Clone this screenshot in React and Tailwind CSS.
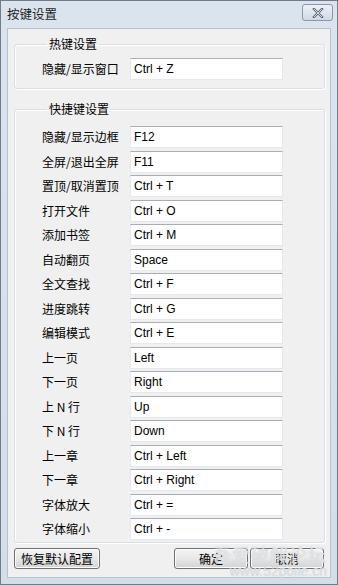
import React from "react";

const hotkeys = [
  ["隐藏/显示边框", "F12"],
  ["全屏/退出全屏", "F11"],
  ["置顶/取消置顶", "Ctrl + T"],
  ["打开文件", "Ctrl + O"],
  ["添加书签", "Ctrl + M"],
  ["自动翻页", "Space"],
  ["全文查找", "Ctrl + F"],
  ["进度跳转", "Ctrl + G"],
  ["编辑模式", "Ctrl + E"],
  ["上一页", "Left"],
  ["下一页", "Right"],
  ["上 N 行", "Up"],
  ["下 N 行", "Down"],
  ["上一章", "Ctrl + Left"],
  ["下一章", "Ctrl + Right"],
  ["字体放大", "Ctrl + ="],
  ["字体缩小", "Ctrl + -"],
];

const cjk = "font-['Noto_Sans_CJK_SC','Microsoft_YaHei',sans-serif]";

const KeyRow = ({ label, value }) => (
  <>
    <div className={`${cjk} text-[12px] leading-[22px] text-black`}>{label}</div>
    <input
      readOnly
      value={value}
      className="h-[22px] w-[153px] bg-white border border-[#e3e9ef] border-t-[#abadb3] px-[3px] font-['Liberation_Sans',Arial,sans-serif] text-[12px] text-black outline-none"
    />
  </>
);

const WinButton = ({ children, className = "" }) => (
  <button
    className={`h-[21px] rounded-[3px] border border-[#707070] bg-gradient-to-b from-[#f4f4f4] via-[#e8e8e8] to-[#d3d3d3] ${cjk} text-[12px] leading-none text-black shadow-[inset_0_0_0_1px_#fcfcfc] ${className}`}
  >
    {children}
  </button>
);

export default function App() {
  return (
    <div className="relative w-[338px] h-[585px] overflow-hidden border border-[#6f7c8b] bg-gradient-to-b from-[#dbe4ee] to-[#d3dee9] flex flex-col">
      <div className="h-[27px] flex items-center justify-between pl-[6px] pr-[4px] shrink-0">
        <span className={`${cjk} text-[12.5px] text-[#1e1e1e]`}>按键设置</span>
        <button className="mt-[-4px] w-[31px] h-[17px] rounded-[3px] border border-[#8a97a8] bg-gradient-to-b from-[#eef2f7] to-[#cfd9e5] flex items-center justify-center">
          <svg width="12" height="10" viewBox="0 0 12 10">
            <path d="M2 1 L10 9 M10 1 L2 9" stroke="#5e6a78" strokeWidth="2.4" strokeLinecap="square" />
            <path d="M2 1 L10 9 M10 1 L2 9" stroke="#f4f6f8" strokeWidth="0.8" />
          </svg>
        </button>
      </div>

      <div className="mx-[6px] mb-[6px] flex-1 bg-[#f0f0f0] border border-[#b7c2cf] flex flex-col px-[6px]">
        <fieldset className="mt-[7px] w-[311px] border border-[#d5dfe5] rounded-[3px] pl-[27px] pt-[6px] pb-[8px] shadow-[inset_1px_1px_0_#ffffff,1px_1px_0_#ffffff]">
          <legend className={`${cjk} ml-[5px] px-[2px] text-[12px] leading-[16px] text-black`}>热键设置</legend>
          <div className="grid grid-cols-[88px_153px]">
            <KeyRow label="隐藏/显示窗口" value="Ctrl + Z" />
          </div>
        </fieldset>

        <fieldset className="mt-[12px] w-[311px] border border-[#d5dfe5] rounded-[3px] pl-[27px] pt-[9px] pb-[2px] shadow-[inset_1px_1px_0_#ffffff,1px_1px_0_#ffffff]">
          <legend className={`${cjk} ml-[5px] px-[2px] text-[12px] leading-[16px] text-black`}>快捷键设置</legend>
          <div className="grid grid-cols-[88px_153px] gap-y-[2.5px]">
            {hotkeys.map(([label, value]) => (
              <KeyRow key={label} label={label} value={value} />
            ))}
          </div>
        </fieldset>

        <div className="mt-[5px] flex items-center">
          <WinButton className="w-[86px]">恢复默认配置</WinButton>
          <div className="flex-1" />
          <WinButton className="w-[74px]">确定</WinButton>
          <WinButton className="ml-[2px] w-[74px]">取消</WinButton>
        </div>
      </div>

      <div className="absolute right-[10px] bottom-[6px] flex flex-col items-end pointer-events-none select-none">
        <span className={`${cjk} text-[18px] leading-[20px] tracking-[1px] text-white/60 [text-shadow:0_0_1px_#b0b8c0]`}>吾爱破解论坛</span>
        <span className="font-['Liberation_Sans',Arial,sans-serif] text-[14px] leading-[14px] text-white/50 [text-shadow:0_0_1px_#b0b8c0]">www.52pojie.cn</span>
      </div>
    </div>
  );
}
